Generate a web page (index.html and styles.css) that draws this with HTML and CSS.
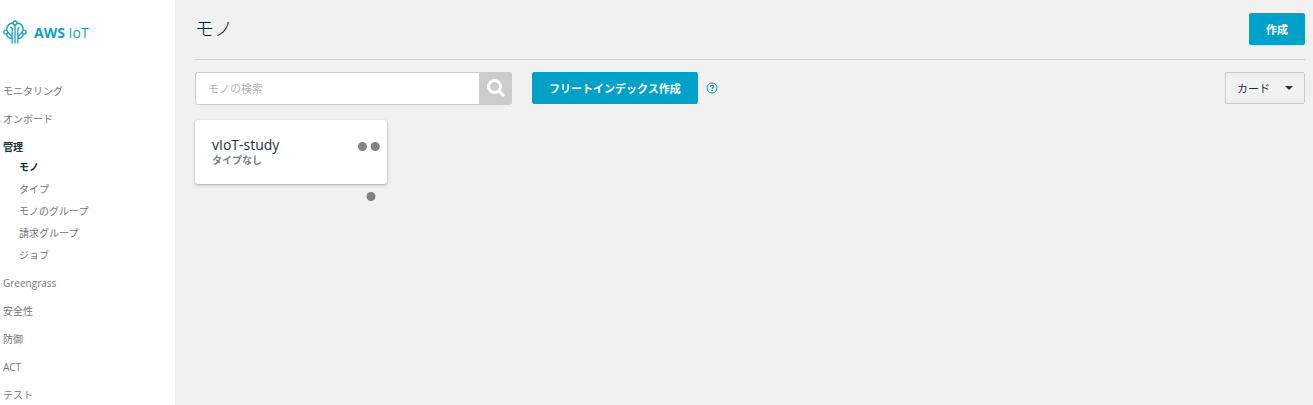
FILE: index.html
```
<!DOCTYPE html>
<html lang="ja">
<head>
<meta charset="utf-8">
<title>AWS IoT - モノ</title>
<link rel="stylesheet" href="styles.css">
</head>
<body>
<div class="app">
  <aside class="sidebar">
    <a class="brand" href="#">
      <svg class="brand-logo" viewBox="0 0 24 26" fill="none" stroke="currentColor" stroke-width="1.300" aria-hidden="true">
        <path d="M10 4C6.500 4.200 4 6.500 3.600 11M14 4C17.500 4.200 20 6.500 20.400 11M3.600 15.500C4.500 18.500 6.500 19.500 9.200 19.500V24.500M20.400 15.500C19.500 18.500 17.500 19.500 14.800 19.500V24.500M12 6V24.500M4.800 13.200L9.200 17.500V19.500M19.200 13.200L14.800 17.500V19.500M9.200 17.500V9.500L7.500 8M14.800 17.500V9.500L16.500 8"/>
        <circle cx="12" cy="4" r="2"/><circle cx="2.800" cy="13.200" r="2"/><circle cx="21.200" cy="13.200" r="2"/>
      </svg>
      <span><b>AWS</b> IoT</span>
    </a>
    <nav>
      <ul class="nav">
        <li><a href="#">モニタリング</a></li>
        <li><a href="#">オンボード</a></li>
        <li>
          <a class="active" href="#">管理</a>
          <ul class="subnav">
            <li><a class="active" href="#">モノ</a></li>
            <li><a href="#">タイプ</a></li>
            <li><a href="#">モノのグループ</a></li>
            <li><a href="#">請求グループ</a></li>
            <li><a href="#">ジョブ</a></li>
          </ul>
        </li>
        <li><a href="#">Greengrass</a></li>
        <li><a href="#">安全性</a></li>
        <li><a href="#">防御</a></li>
        <li><a href="#">ACT</a></li>
        <li><a href="#">テスト</a></li>
      </ul>
    </nav>
  </aside>
  <main class="main">
    <header class="page-header">
      <h1>モノ</h1>
      <button class="primary" type="button">作成</button>
    </header>
    <div class="toolbar">
      <form class="search">
        <input type="text" placeholder="モノの検索" aria-label="モノの検索">
        <button type="button" aria-label="検索">
          <svg viewBox="0 0 20 20" fill="none" stroke="currentColor" stroke-width="3" aria-hidden="true"><circle cx="8.500" cy="7.500" r="6"/><path d="M12.800 11.800L18 17"/></svg>
        </button>
      </form>
      <button class="primary" type="button">フリートインデックス作成</button>
      <a class="help" href="#" aria-label="ヘルプ">
        <svg viewBox="0 0 12 12" fill="none" stroke="currentColor" aria-hidden="true"><circle cx="6" cy="6" r="5"/><path stroke-width="1.200" d="M4.300 4.900C4.300 2.700 7.700 2.700 7.700 4.700C7.700 5.900 6 5.700 6 7.200M6 8V9.200"/></svg>
      </a>
      <div class="view">
        <select aria-label="表示形式"><option>カード</option></select>
        <svg class="caret" viewBox="0 0 8 4" aria-hidden="true"><path d="M0 0H8L4 4Z"/></svg>
      </div>
    </div>
    <section class="cards">
      <article class="card">
        <h2>vIoT-study</h2>
        <p>タイプなし</p>
        <button class="more" type="button" aria-label="その他の操作">
          <svg viewBox="0 0 24 62" aria-hidden="true"><circle cx="5.500" cy="5.500" r="4.500"/><circle cx="18.200" cy="5.500" r="4.500"/><circle cx="14" cy="55.500" r="4.500"/></svg>
        </button>
      </article>
    </section>
  </main>
</div>
</body>
</html>
```
FILE: styles.css
```
* { box-sizing: border-box; }
body {
  margin: 0;
  background: #f1f1f1;
  color: #16333d;
  font-family: "Open Sans", "Noto Sans CJK JP", sans-serif;
  font-size: 11px;
}
h1, h2, p, ul { margin: 0; padding: 0; font-weight: 400; }
ul { list-style: none; }
a { color: inherit; text-decoration: none; }
button, input, select { font: inherit; margin: 0; border: 0; }
svg { display: block; }
.app { display: flex; min-height: 100vh; }
.sidebar {
  flex: 0 0 175px;
  height: 100vh;
  overflow: hidden;
  padding: 19px 3px 0;
  background: #fff;
}
.brand {
  display: flex;
  align-items: center;
  gap: 7px;
  height: 26px;
  color: #129fc9;
  font-size: 14px;
}
.brand-logo { width: 24px; height: 26px; }
.nav {
  padding-top: 36px;
  color: #757575;
  font-size: 10px;
  line-height: 20px;
}
.nav > li { margin-bottom: 8px; }
.nav a { display: block; }
.subnav { margin: -1px 0; padding-left: 16px; line-height: 22px; }
.nav .active { color: #16333d; font-weight: 700; }
.main { flex: 1; padding: 0 8px 0 20px; }
.page-header {
  display: flex;
  align-items: center;
  justify-content: space-between;
  height: 60px;
  padding-bottom: 2px;
  border-bottom: 1px solid #ccc;
}
h1 { font-size: 19px; font-weight: 300; line-height: 28px; color: #00222e; }
.primary {
  height: 32px;
  padding: 0 17px;
  border-radius: 2px;
  background: #00a1c9;
  color: #fff;
  font-weight: 700;
}
.toolbar { display: flex; align-items: flex-start; padding-top: 12px; }
.search { display: flex; width: 317px; height: 33px; margin-right: 20px; }
.search input {
  flex: 1;
  min-width: 0;
  padding: 0 12px;
  border: 1px solid #ccc;
  border-right: 0;
  border-radius: 3px 0 0 3px;
  background: #fff;
}
.search input::placeholder { color: #b4b4b4; opacity: 1; }
.search button {
  display: grid;
  place-items: center;
  width: 33px;
  padding: 0;
  border-radius: 0 3px 3px 0;
  background: #ccc;
  color: #fff;
}
.search svg { width: 20px; height: 20px; }
.help { padding: 10px 0 0 8px; color: #00a1c9; }
.help svg { width: 12px; height: 12px; }
.view { position: relative; margin-left: auto; }
.view select {
  appearance: none;
  width: 80px;
  height: 32px;
  padding: 0 24px 0 11px;
  border: 1px solid #ccc;
  border-radius: 2px;
  background: #f1f1f1;
  color: #16333d;
}
.caret {
  position: absolute;
  top: 14px;
  right: 12px;
  width: 8px;
  height: 4px;
  fill: #333;
  pointer-events: none;
}
.cards { display: flex; padding-top: 15px; }
.card {
  position: relative;
  width: 192px;
  height: 64px;
  padding: 16px 17px;
  border-radius: 3px;
  background: #fff;
  box-shadow: 0 1px 3px rgba(0, 0, 0, 0.3);
}
.card h2 { font-size: 14px; line-height: 18px; }
.card p { color: #7f7f7f; font-size: 10px; font-weight: 700; line-height: 13px; }
.more {
  position: absolute;
  top: 21px;
  right: 6px;
  padding: 0;
  background: none;
}
.more svg { width: 24px; height: 62px; fill: #828282; }
```
